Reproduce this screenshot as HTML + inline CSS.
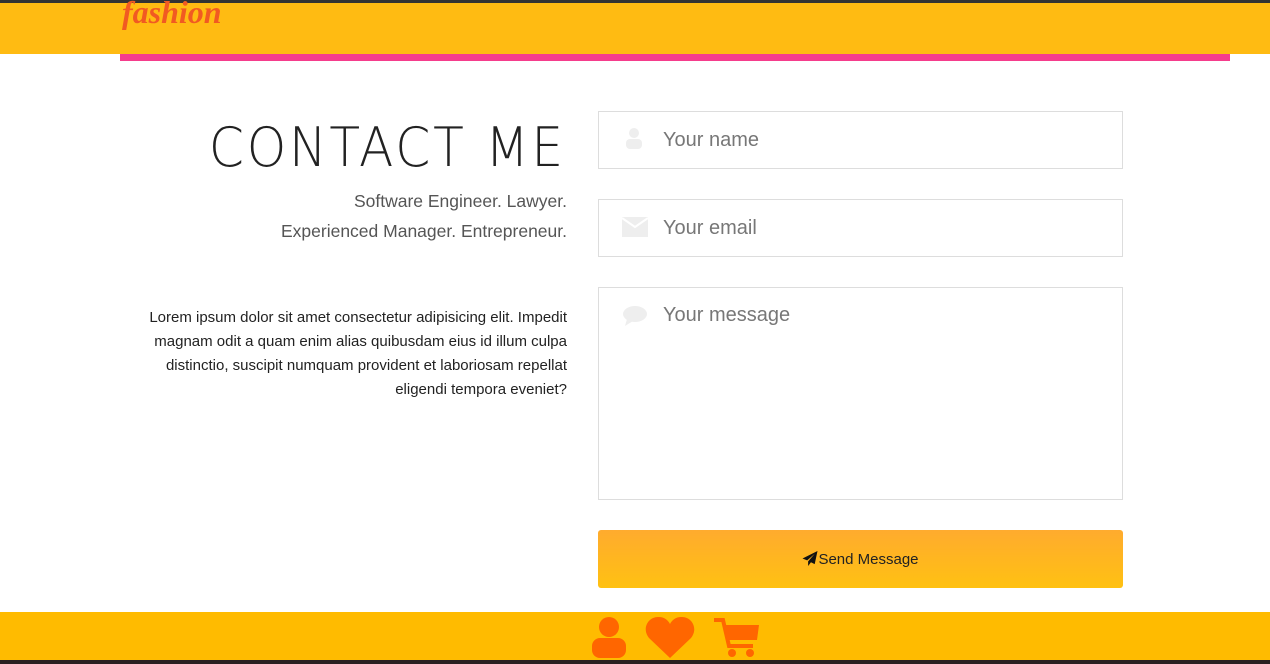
<!DOCTYPE html>
<html><head><style>
*{margin:0;padding:0;box-sizing:border-box}
body{width:1270px;height:664px;overflow:hidden;background:#fff;font-family:"Liberation Sans",sans-serif;position:relative}
.top{position:absolute;left:0;top:0;width:1270px;height:3px;background:#333}
.hdr{position:absolute;left:0;top:3px;width:1270px;height:51px;background:#ffbb12}
.logo{position:absolute;left:122px;top:-9px;font-family:"Liberation Serif",serif;font-style:italic;font-weight:bold;font-size:32px;color:#f15a22}
.pink{position:absolute;left:120px;top:54px;width:1110px;height:7px;background:#f53d8c}
h1{position:absolute;right:704px;top:116px;font-size:54px;letter-spacing:3px;color:#222;font-family:"DejaVu Sans",sans-serif;font-weight:200;white-space:nowrap;transform:scaleX(.93);transform-origin:right}
.sub{position:absolute;right:703px;top:186px;text-align:right;font-size:17.5px;line-height:30px;color:#555}
.lorem{position:absolute;right:703px;top:306px;width:430px;text-align:right;font-size:15px;line-height:24px;color:#222}
.inp{position:absolute;left:598px;width:525px;border:1px solid #ddd;background:#fff}
.inp span{position:absolute;left:64px;font-size:20px;color:#777}
.inp svg{position:absolute;left:23px}
.btn{position:absolute;left:598px;top:530px;width:525px;height:58px;background:linear-gradient(#ffab2e,#ffc112);border-radius:3px;text-align:center;line-height:60px;font-size:15px;color:#222}
.foot{position:absolute;left:0;top:612px;width:1270px;height:48px;background:#ffbb00}
.bot{position:absolute;left:0;top:660px;width:1270px;height:4px;background:#2a2020}
</style></head><body>
<div class="top"></div>
<div class="hdr"><div class="logo">fashion</div></div>
<div class="pink"></div>
<h1>CONTACT ME</h1>
<div class="sub">Software Engineer. Lawyer.<br>Experienced Manager. Entrepreneur.</div>
<div class="lorem">Lorem ipsum dolor sit amet consectetur adipisicing elit. Impedit magnam odit a quam enim alias quibusdam eius id illum culpa distinctio, suscipit numquam provident et laboriosam repellat eligendi tempora eveniet?</div>
<div class="inp" style="top:111px;height:58px"><svg style="top:14px" width="24" height="24" viewBox="0 0 24 24"><circle cx="12" cy="7" r="5" fill="#eee"/><rect x="4" y="13" width="16" height="10" rx="4" fill="#eee"/></svg><span style="top:17px">Your name</span></div>
<div class="inp" style="top:199px;height:58px"><svg style="top:17px" width="26" height="20" viewBox="0 0 26 20"><rect width="26" height="20" fill="#eee"/><path d="M0 1L13 10L26 1" stroke="#fff" stroke-width="2" fill="none"/></svg><span style="top:17px">Your email</span></div>
<div class="inp" style="top:287px;height:213px"><svg style="top:17px" width="26" height="22" viewBox="0 0 26 22"><ellipse cx="13" cy="9" rx="12" ry="8" fill="#eee"/><path d="M5 14L3 21L11 16Z" fill="#eee"/></svg><span style="top:16px">Your message</span></div>
<div class="btn"><svg width="16" height="15" viewBox="0 0 16 16" style="vertical-align:-2px"><path d="M16 0L0 8L5 10L13 3L6 11L6 16L9 12L13 14Z" fill="#111"/></svg>Send Message</div>
<div class="foot">
<svg style="position:absolute;left:591px;top:4px" width="36" height="42" viewBox="0 0 36 42"><circle cx="18" cy="11" r="10" fill="#ff6600"/><rect x="1" y="22" width="34" height="20" rx="8" fill="#ff6600"/></svg>
<svg style="position:absolute;left:645px;top:4px" width="50" height="42" viewBox="0 0 50 42"><path d="M25 42L4 22C-4 12 4 0 14 1C19 1 23 4 25 8C27 4 31 1 36 1C46 0 54 12 46 22Z" fill="#ff6600"/></svg>
<svg style="position:absolute;left:713px;top:6px" width="48" height="40" viewBox="0 0 48 40"><path d="M1 2H10L16 28H40" stroke="#ff6600" stroke-width="4" fill="none"/><path d="M12 7H46L44 22H15Z" fill="#ff6600"/><circle cx="19" cy="35" r="4" fill="#ff6600"/><circle cx="37" cy="35" r="4" fill="#ff6600"/></svg>
</div>
<div class="bot"></div>
</body></html>
